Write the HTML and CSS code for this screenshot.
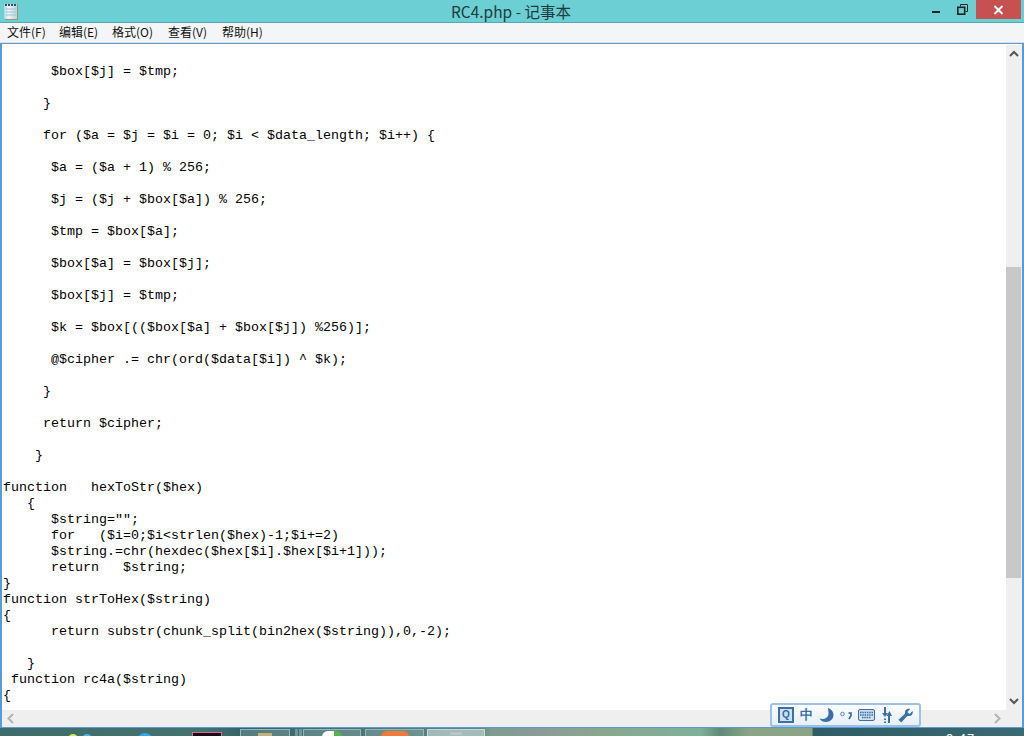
FILE: index.html
```html
<!DOCTYPE html>
<html lang="zh">
<head>
<meta charset="utf-8">
<title>RC4.php - 记事本</title>
<link rel="stylesheet" href="styles.css">
</head>
<body>
<div class="window">
  <header class="titlebar">
    <svg class="app-icon" width="15" height="17" viewBox="0 0 15 17"><defs><linearGradient id="pad" x1="0" x2="1" y1="0" y2="0"><stop offset="0" stop-color="#a9d9e6"/><stop offset=".35" stop-color="#eef8fb"/><stop offset="1" stop-color="#b5d3de"/></linearGradient></defs><rect x="1" y="1" width="13" height="16" fill="#a8906c"/><rect x="0" y="1" width="13" height="15" fill="url(#pad)"/><path d="M1 2h2M4 2h2M7 2h2M10 2h2" stroke="#3c4a50" stroke-width="2"/><path d="M2 6h10M2 9h10M2 12h10" stroke="#9cc4d2"/></svg>
    <div class="title">RC4.php - 记事本</div>
    <div class="controls">
      <div class="ctl"><span class="min"></span></div>
      <div class="ctl"><svg width="11" height="11" viewBox="0 0 11 11"><path d="M3.500 2.500V.5h7v7H8.500" fill="none" stroke="#222"/><rect x=".8" y="3.300" width="6.900" height="6.900" fill="none" stroke="#222" stroke-width="1.600"/></svg></div>
      <div class="close"><svg width="11" height="10" viewBox="0 0 11 10"><path d="M1.500 1l8 8M9.500 1l-8 8" stroke="#fff" stroke-width="2"/></svg></div>
    </div>
  </header>
  <nav class="menubar">
    <span class="m1">文件(F)</span><span class="m2">编辑(E)</span><span class="m3">格式(O)</span><span class="m4">查看(V)</span><span>帮助(H)</span>
  </nav>
  <main class="frame">
    <div class="upper">
<pre class="code">

      $box[$j] = $tmp;

     }

     for ($a = $j = $i = 0; $i &lt; $data_length; $i++) {

      $a = ($a + 1) % 256;

      $j = ($j + $box[$a]) % 256;

      $tmp = $box[$a];

      $box[$a] = $box[$j];

      $box[$j] = $tmp;

      $k = $box[(($box[$a] + $box[$j]) %256)];

      @$cipher .= chr(ord($data[$i]) ^ $k);

     }

     return $cipher;

    }

function   hexToStr($hex)
   {
      $string="";
      for   ($i=0;$i&lt;strlen($hex)-1;$i+=2)
      $string.=chr(hexdec($hex[$i].$hex[$i+1]));
      return   $string;
}
function strToHex($string)
{
      return substr(chunk_split(bin2hex($string)),0,-2);

   }
 function rc4a($string)
{
</pre>
      <div class="vscroll">
        <svg class="arrow" width="16" height="17" viewBox="0 0 16 17"><path d="M4 11l4-4 4 4" fill="none" stroke="#555" stroke-width="2"/></svg>
        <div class="track-top"></div>
        <div class="thumb"></div>
        <div class="track-bottom"></div>
        <svg class="arrow" width="16" height="17" viewBox="0 0 16 17"><path d="M4 6l4 4 4-4" fill="none" stroke="#555" stroke-width="2"/></svg>
      </div>
    </div>
    <div class="hscroll">
      <svg width="17" height="17" viewBox="0 0 17 17"><path d="M11 4L6.500 8.500 11 13" fill="none" stroke="#b4b4b4" stroke-width="2"/></svg>
      <svg width="17" height="17" viewBox="0 0 17 17"><path d="M6 4l4.500 4.500L6 13" fill="none" stroke="#b4b4b4" stroke-width="2"/></svg>
    </div>
  </main>
  <footer class="taskbar">
    <div class="desk-icons">
      <span class="dot yellow"></span><span class="dot blue"></span><span class="dot blue2"></span><span class="pic"></span>
    </div>
    <div class="tasks">
      <span class="task t1"><i class="glyph tan"></i></span>
      <span class="strip"></span><span class="strip"></span>
      <span class="task t2"><i class="glyph white"></i></span>
      <span class="task t3"><i class="glyph orange"></i></span>
      <span class="task t4"><i class="glyph grey"></i></span>
    </div>
    <span class="clock">9:47</span>
  </footer>
</div>
<div class="ime">
  <span class="ime-q">Q</span>
  <span class="ime-zh">中</span>
  <svg width="15" height="16" viewBox="0 0 15 16"><path d="M9 1c3 1 5.500 3.500 5.500 7 0 4-3.500 7-7.500 7-3 0-5-1-6.500-3.500 4 1.500 9-.5 9-5 0-2-.2-3.500-.5-5.500z" fill="#3a6fa8"/></svg>
  <svg width="12" height="12" viewBox="0 0 12 12"><circle cx="2.500" cy="5" r="1.800" fill="none" stroke="#5a8cc0"/><path d="M8.500 4h2.500v2.500L9 10" fill="none" stroke="#2f68a6" stroke-width="1.600"/></svg>
  <svg width="17" height="12" viewBox="0 0 17 12"><rect x=".5" y=".5" width="16" height="11" rx="1.500" fill="#cfdff0" stroke="#3a6fa8"/><path d="M2 3.500h13M2 6h13M4 8.500h9" stroke="#3a6fa8" stroke-width="1.300" stroke-dasharray="1.500 .8"/></svg>
  <svg width="11" height="16" viewBox="0 0 11 16"><path d="M3 0h2v6h2l-3 4-3-4h2zM3 11.500h2v1.500H3zM3 14.500h2V16H3z" fill="#3a6fa8"/><path d="M7 16V9H5.500L8.500 4l2.500 5H9v7z" fill="#3a6fa8"/></svg>
  <svg width="15" height="15" viewBox="0 0 15 15"><path d="M14.500 3l-3 3-2.200-2 3-3c-2.500-1-5.300.3-5.300 3.200 0 .8 0 1.300-.3 1.800L.5 11.800 3.200 14.500 9 8.300c.5-.3 1-.3 2-.3 3 0 4.500-2.500 3.500-5z" fill="#3a6fa8"/></svg>
</div>
</body>
</html>
```

FILE: styles.css
```css
html, body {
  margin: 0;
  padding: 0;
  width: 1024px;
  height: 736px;
  overflow: hidden;
}
.window {
  width: 1024px;
  height: 736px;
  display: flex;
  flex-direction: column;
  background: #6acfd4;
  font-family: "Noto Sans CJK SC", "Liberation Sans", sans-serif;
}
.titlebar {
  height: 22px;
  flex: none;
  display: flex;
  align-items: flex-start;
  background: #6bcfd4;
  border-bottom: 1px solid #52a9ad;
  position: relative;
}
.app-icon {
  margin: 3px 0 0 4px;
  flex: none;
}
.title {
  position: absolute;
  left: -1px;
  right: 1px;
  top: 1px;
  text-align: center;
  font-size: 15.5px;
  line-height: 20px;
  color: #1f3a3c;
}
.controls {
  margin-left: auto;
  margin-right: 3px;
  display: flex;
  height: 19px;
}
.ctl {
  width: 26px;
  height: 19px;
  display: flex;
  align-items: center;
  justify-content: center;
}
.min {
  display: block;
  width: 8px;
  height: 2px;
  background: #222;
  margin-top: 5px;
}
.close {
  width: 45px;
  height: 19px;
  margin-left: 1px;
  background: #c75050;
  display: flex;
  align-items: center;
  justify-content: center;
}
.menubar {
  height: 20px;
  box-sizing: border-box;
  flex: none;
  background: #f4f5f7;
  display: flex;
  padding-left: 7px;
  font-size: 12px;
  line-height: 18px;
  color: #111;
  border-bottom: 1px solid #dfe0e2;
}
.menubar span {
  white-space: nowrap;
}
.m1 { width: 52px; }
.m2 { width: 53px; }
.m3 { width: 56px; }
.m4 { width: 54px; }
.frame {
  height: 685px;
  flex: none;
  border: 1px solid #5b9bd5;
  border-left-width: 2px;
  border-right-width: 2px;
  display: flex;
  flex-direction: column;
  background: #fff;
  box-sizing: border-box;
}
.upper {
  flex: 1;
  min-height: 0;
  display: flex;
  overflow: hidden;
}
.code {
  flex: 1;
  margin: 0;
  padding: 4px 0 0 1px;
  font-family: "Liberation Mono", "DejaVu Sans Mono", monospace;
  font-size: 13.33px;
  line-height: 16px;
  color: #000;
  background: #fff;
  overflow: hidden;
  white-space: pre;
}
.vscroll {
  width: 16px;
  flex: none;
  margin-top: 1px;
  background: #efefef;
  display: flex;
  flex-direction: column;
}
.arrow {
  flex: none;
}
.track-top {
  height: 205px;
}
.thumb {
  width: 15px;
  height: 311px;
  background: #c8c8c8;
}
.track-bottom {
  flex: 1;
}
.hscroll {
  height: 17px;
  flex: none;
  background: #efefef;
  display: flex;
  justify-content: space-between;
  padding-right: 16px;
}
.taskbar {
  flex: 1;
  min-height: 0;
  display: flex;
  overflow: hidden;
  background: linear-gradient(90deg, #3d6c6c 0%, #44736e 20%, #356468 23.4%, #5f8a80 47%, #7d9c8f 47.9%, #8b9b98 52.7%, #8aa68e 58.6%, #7fb09a 68.4%, #5f8a78 70.3%, #8aa585 73.2%, #8aa585 79.3%, #2f5c66 79.4%, #3a6a72 100%);
}
.desk-icons {
  width: 240px;
  flex: none;
  display: flex;
  align-items: flex-start;
  padding-left: 68px;
  box-sizing: border-box;
}
.dot {
  width: 10px;
  height: 10px;
  border-radius: 50%;
  margin-top: 6px;
}
.yellow { background: #d9ec3a; }
.blue { background: #4cb5ee; margin-left: 4px; }
.blue2 { background: #2fa8ea; width: 16px; height: 16px; margin: 5px 0 0 45px; }
.pic {
  width: 30px;
  height: 12px;
  margin: 4px 0 0 39px;
  background: #1a0c16;
  border: 1px solid #d96b9a;
  box-sizing: border-box;
}
.tasks {
  display: flex;
}
.task {
  display: flex;
  justify-content: center;
  height: 8px;
  margin-top: 1px;
  background: rgba(190, 215, 220, 0.22);
  border: 1px solid #9ab4b8;
  border-bottom: 0;
  box-sizing: border-box;
}
.strip {
  width: 3px;
  height: 8px;
  margin: 1px 0 0 1px;
  background: rgba(190, 215, 220, 0.4);
}
.t1 { width: 50px; margin-right: 4px; }
.strip + .strip { margin-right: 1px; }
.t2 { width: 58px; margin-right: 4px; }
.t3 { width: 59px; margin-right: 3px; }
.t4 { width: 58px; background: rgba(220, 232, 235, 0.55); border-color: #c9d8da; }
.glyph { display: block; margin-top: 3px; }
.tan { width: 14px; height: 6px; background: #c9b07a; }
.white { width: 20px; height: 6px; margin-top: 1px; background: linear-gradient(90deg, #fff 60%, #57b24a 60%); border-radius: 8px 8px 0 0; }
.orange { width: 28px; height: 6px; margin-top: 1px; background: #f07a3c; border-radius: 10px 10px 0 0; }
.grey { width: 12px; height: 3px; margin-top: 2px; background: #b9c6c8; }
.clock {
  margin: 3px 0 0 461px;
  font: 13px/16px "Liberation Sans", sans-serif;
  letter-spacing: 1px;
  color: #fff;
}
.ime {
  position: absolute;
  left: 770px;
  top: 703px;
  width: 151px;
  height: 24px;
  box-sizing: border-box;
  display: flex;
  align-items: center;
  gap: 6px;
  padding-left: 6px;
  background: linear-gradient(#fbfdff, #e6eff8);
  border: 2px solid #9cc0e6;
  border-radius: 3px;
}
.ime-q {
  width: 16px;
  height: 16px;
  box-sizing: border-box;
  display: flex;
  align-items: center;
  justify-content: center;
  background: #cfe0f2;
  border: 2px solid #3a6fa8;
  font: bold 10px/12px "Liberation Sans", sans-serif;
  color: #2f68a6;
}
.ime-zh {
  width: 13px;
  font-size: 13px;
  line-height: 18px;
  font-weight: 700;
  color: #3a6fa8;
}
```
